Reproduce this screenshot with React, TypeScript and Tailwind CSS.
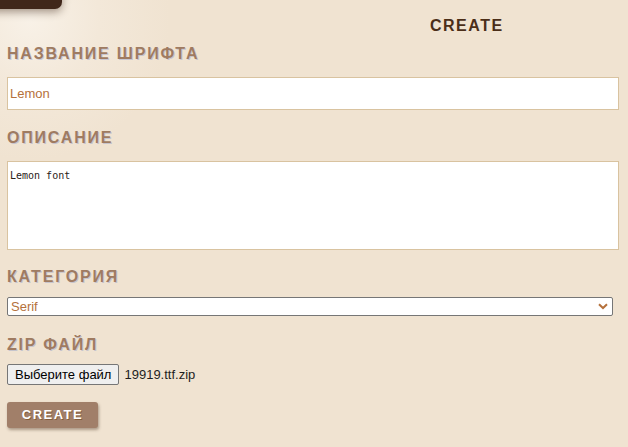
import React from 'react';

const headingCls =
  "block text-[16px] leading-[20px] font-bold tracking-[1.8px] text-[#9f7b61] [text-shadow:1px_1px_0_rgba(120,140,200,0.35)]";

const App: React.FC = () => {
  return (
    <div
      className="relative w-[628px] h-[447px] overflow-hidden bg-[#f0e3d1] bg-[radial-gradient(circle_at_30px_20px,#f8f1e7_0px,#f3e8d9_70px,#f0e3d1_140px)]"
      style={{ fontFamily: '"Liberation Sans", Arial, sans-serif' }}
    >
      {/* верхняя кнопка, обрезанная краем окна */}
      <div className="absolute left-[-20px] top-[-30px] w-[82px] h-[39px] rounded-[7px] bg-[#40271a] shadow-[0_3px_8px_rgba(60,35,20,0.45)]" />

      <div className="flex flex-col px-[7px] pt-[16px]">
        <div className="ml-[423px] text-[16px] leading-[20px] font-bold tracking-[1.5px] text-[#4b2e18]">
          CREATE
        </div>

        <label className={`mt-[8px] ${headingCls}`}>НАЗВАНИЕ ШРИФТА</label>
        <input
          defaultValue="Lemon"
          className="mt-[13px] w-[612px] h-[33px] bg-white border border-[#d9c3a0] px-[2px] text-[13px] text-[#b5713c] outline-none"
        />

        <label className={`mt-[18px] ${headingCls}`}>ОПИСАНИЕ</label>
        <textarea
          defaultValue="Lemon font"
          className="block mt-[13px] w-[612px] h-[89px] bg-white border border-[#d9c3a0] px-[2px] py-[7px] text-[10px] leading-[13px] text-[#2b2118] resize-none outline-none"
          style={{ fontFamily: '"DejaVu Sans Mono", monospace' }}
        />

        <label className={`mt-[17px] ${headingCls}`}>КАТЕГОРИЯ</label>
        <div className="relative mt-[10px] w-[606px] h-[19px]">
          <select
            defaultValue="Serif"
            className="block appearance-none w-full h-[19px] bg-white border border-[#767676] rounded-[2px] pl-[3px] py-0 text-[13px] leading-[17px] text-[#b5713c] outline-none"
          >
            <option>Serif</option>
            <option>Sans-serif</option>
            <option>Display</option>
          </select>
          <svg
            className="absolute right-[5px] top-[6px] pointer-events-none"
            width="10"
            height="7"
            viewBox="0 0 10 7"
          >
            <path d="M1 1.2 L5 5 L9 1.2" fill="none" stroke="#b5713c" strokeWidth="2" />
          </svg>
        </div>

        <label className={`mt-[19px] ${headingCls}`}>ZIP ФАЙЛ</label>
        <div className="mt-[9px] flex items-center h-[21px]">
          <button className="h-[21px] px-[7px] bg-[#efefef] border border-[#767676] rounded-[2px] text-[13px] text-black leading-[17px]">
            Выберите файл
          </button>
          <span className="ml-[5px] text-[13px] text-[#1e1e1e]">19919.ttf.zip</span>
        </div>

        <div className="mt-[17px]">
          <button className="block w-[91px] h-[26px] rounded-[3px] bg-[#a17f69] text-white text-[13px] font-bold tracking-[1.5px] shadow-[1px_2px_3px_rgba(70,45,25,0.4)] [text-shadow:1px_1px_0_rgba(120,80,40,0.7)]">
            CREATE
          </button>
        </div>
      </div>
    </div>
  );
};

export default App;
